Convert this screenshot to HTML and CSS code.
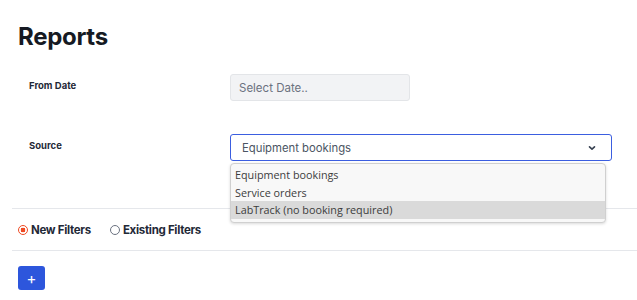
FILE: index.html
```html
<!DOCTYPE html>
<html lang="en">
<head>
  <meta charset="UTF-8">
  <meta name="viewport" content="width=device-width, initial-scale=1.0">
  <title>Reports</title>
  <link rel="stylesheet" href="styles.css">
</head>
<body>

<main class="page">
  <h1 class="title">Reports</h1>

  <!-- Report form -->
  <section class="form">
    <div class="row">
      <label class="label" for="from-date">From Date</label>
      <div class="field">
        <input class="date-input" id="from-date" type="text" placeholder="Select Date..">
      </div>
    </div>

    <div class="row">
      <label class="label" for="source">Source</label>
      <div class="field">
        <div class="select" id="source">
          <span>Equipment bookings</span>
          <svg class="chevron" width="10" height="10" viewBox="0 0 10 10">
            <path d="M2.5 3.8 L5 6.2 L7.5 3.8" fill="none" stroke="#374151" stroke-width="1.6" stroke-linecap="round" stroke-linejoin="round"/>
          </svg>
        </div>
        <ul class="dropdown">
          <li>Equipment bookings</li>
          <li>Service orders</li>
          <li class="active">LabTrack (no booking required)</li>
        </ul>
      </div>
    </div>
  </section>

  <!-- Filter type -->
  <div class="filters">
    <label class="radio"><span class="dot checked"></span>New Filters</label>
    <label class="radio"><span class="dot"></span>Existing Filters</label>
  </div>

  <div class="actions">
    <button class="add-btn">+</button>
  </div>
</main>

</body>
</html>
```

FILE: styles.css
```css
* {
  margin: 0;
  padding: 0;
  box-sizing: border-box;
}
body {
  font-family: 'Inter', 'Liberation Sans', sans-serif;
  background: #fff;
  color: #111827;
}
.page {
  padding: 21px 0 0 12px;
}
.title {
  font-size: 24px;
  font-weight: 700;
  letter-spacing: -0.3px;
  line-height: 32px;
  margin-left: 6px;
  color: #161a23;
}
.form {
  padding: 21px 0 0 17px;
  height: 156px;
  border-bottom: 1px solid #e5e7eb;
}
.row {
  display: grid;
  grid-template-columns: 201px 1fr;
  align-items: start;
  margin-bottom: 33px;
}
.label {
  font-size: 9.5px;
  font-weight: 700;
  color: #1f2937;
  padding-top: 6px;
}
.field {
  position: relative;
  padding-right: 25px;
}
.date-input {
  width: 180px;
  height: 27px;
  border: 1px solid #e3e5e8;
  border-radius: 3px;
  background: #f2f3f5;
  padding: 0 8px;
  font-family: inherit;
  font-size: 11.5px;
  color: #374151;
  outline: none;
}
.date-input::placeholder {
  color: #6b7280;
}
.select {
  height: 27px;
  border: 1.5px solid #3b5ee0;
  border-radius: 3px;
  display: flex;
  align-items: center;
  justify-content: space-between;
  padding: 0 14px 0 11px;
  font-size: 11.3px;
  color: #4b5563;
}
.dropdown {
  position: absolute;
  top: 29px;
  left: 0;
  width: 376px;
  list-style: none;
  background: #f8f8f8;
  border: 1px solid #d0d0d0;
  border-radius: 4px;
  box-shadow: 0 1px 3px rgba(0, 0, 0, 0.15);
  padding: 2px 0 3px;
  font-family: 'Open Sans', 'Noto Sans', sans-serif;
  font-size: 10.8px;
  color: #3c3c3c;
}
.dropdown li {
  height: 17.5px;
  line-height: 17.5px;
  padding-left: 4px;
}
.dropdown li.active {
  background: #dadada;
}
.filters {
  display: flex;
  align-items: center;
  gap: 19px;
  height: 42px;
  padding-left: 6px;
  border-bottom: 1px solid #e5e7eb;
}
.radio {
  display: flex;
  align-items: center;
  gap: 3px;
  font-size: 11.5px;
  font-weight: 700;
  letter-spacing: -0.3px;
  color: #1f2937;
}
.dot {
  width: 10px;
  height: 10px;
  border: 1px solid #6b7280;
  border-radius: 50%;
  display: inline-block;
}
.dot.checked {
  border: 1.5px solid #ef4a23;
  background: radial-gradient(circle, #ef4a23 0 2.2px, #fff 2.6px);
}
.actions {
  padding: 15px 0 0 6px;
}
.add-btn {
  width: 27px;
  height: 24px;
  border: none;
  border-radius: 3px;
  background: #2d56dc;
  color: #fff;
  font-family: inherit;
  font-size: 15px;
  line-height: 1;
  cursor: pointer;
}
```
